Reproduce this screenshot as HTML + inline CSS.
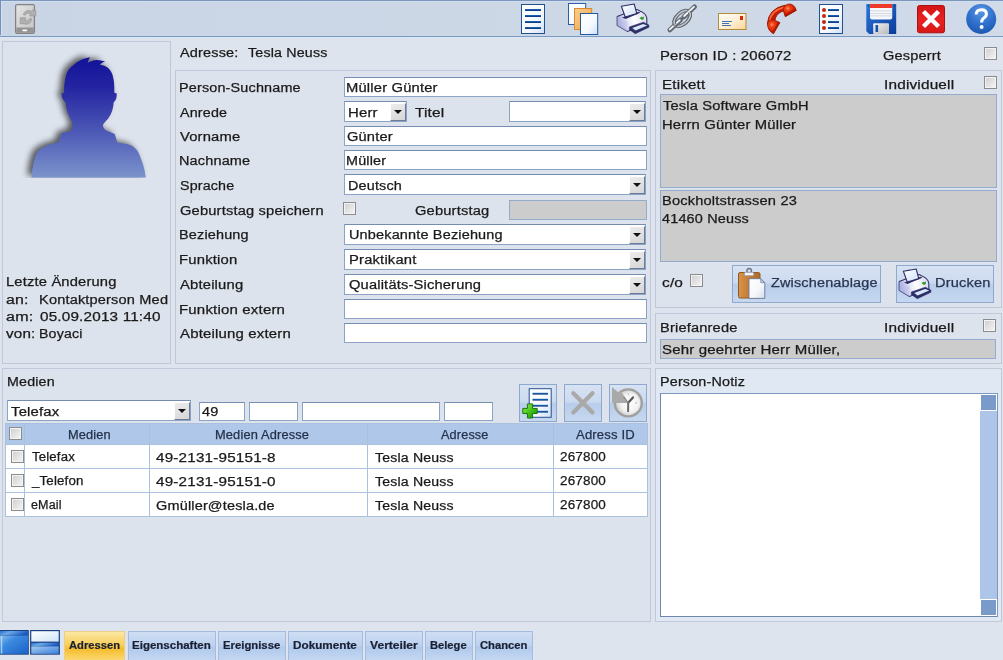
<!DOCTYPE html>
<html>
<head>
<meta charset="utf-8">
<title>Person</title>
<style>
html,body{margin:0;padding:0;}
body{width:1003px;height:660px;overflow:hidden;background:#dee4ed;position:relative;
 font-family:"Liberation Sans",sans-serif;font-size:12.5px;letter-spacing:0.15px;color:#1a1a1a;}
.abs,.t,.pn,.in,.sel,.cb,.gray,.btn{position:absolute;box-sizing:border-box;}
.t{transform-origin:0 0;white-space:nowrap;line-height:16px;height:16px;-webkit-text-stroke:0.25px currentColor;}
.pn{border:1px solid #c0c8d9;background:#dde3ed;}
.in{background:#fff;border:1px solid #8da3c6;border-top-color:#768db2;height:20px;line-height:18px;padding-left:3px;white-space:nowrap;overflow:hidden;}
.sel{background:#fff;border:1px solid #8da3c6;border-top-color:#768db2;height:21px;line-height:18px;padding-left:3px;white-space:nowrap;overflow:hidden;}
.sel i{position:absolute;right:0;top:1px;width:16px;height:18px;box-sizing:border-box;background:linear-gradient(160deg,#ececec,#d6d6d6);border:1px solid #6c7c96;border-top-color:#fdfdfd;border-left-color:#fdfdfd;}
.sel i:after{content:"";position:absolute;left:3px;top:6px;border:4px solid transparent;border-top:4px solid #111;border-bottom:0;}
.cb{width:13px;height:13px;border:1px solid #8b8c8e;background:linear-gradient(135deg,#cdcdcf,#f7f7f7);box-shadow:inset 0 0 0 1px #f3f3f4;}
.gray{background:#cccccc;border:1px solid #94abcd;}
#toolbar{position:absolute;left:0;top:0;width:1003px;height:38px;box-sizing:border-box;
 background:linear-gradient(90deg,#c9d5e5,#d0dae8);border-top:1px solid #7d97ba;border-bottom:1px solid #d8e5f8;
 box-shadow:inset 0 1px 0 #cfdef2, inset 0 -1px 0 #7f9abf;}
#tbl{position:absolute;left:0;top:0;width:1px;height:35px;background:#7590b8;}
#tbl:after{content:"";position:absolute;left:1px;top:2px;width:1px;height:33px;background:#d3e0f3;}

.btn{border:1px solid #8fa8cd;background:linear-gradient(#d7e2f3 0%,#ccdaf0 46%,#b9cdea 52%,#bfd2ed 75%,#c6d8f0 100%);}
.hd{background:#afc7e9;}
.wc{background:#fff;}
.tab{position:absolute;box-sizing:border-box;top:631px;height:29px;border:1px solid #a3bce0;border-bottom:0;
 background:linear-gradient(#cfdef4 0%,#bcd1ef 50%,#b0c9ec 55%,#c3d7f2 100%);font-weight:bold;font-size:11.5px;letter-spacing:0.2px;color:#1b2436;}
.tab.act{background:linear-gradient(#fce7a4 0%,#f9cf5c 45%,#f6bd2c 60%,#fbd772 100%);border-color:#e9cf8a;}
#root{position:absolute;left:0;top:0;width:1003px;height:660px;will-change:transform;}
.tt{position:absolute;top:639px;transform-origin:0 0;-webkit-text-stroke:0.2px currentColor;white-space:nowrap;line-height:14px;height:14px;font-weight:bold;font-size:10px;letter-spacing:0;color:#1a2034;}
</style>
</head>
<body>
<div id="root">
<div id="toolbar"></div><div id="tbl"></div>
<!--TB-->
<svg width="0" height="0" style="position:absolute">
<defs>
<linearGradient id="gPage" x1="0" y1="0" x2="1" y2="1"><stop offset="0" stop-color="#ffffff"/><stop offset="0.6" stop-color="#f4f8fe"/><stop offset="1" stop-color="#cfe0f8"/></linearGradient>
<linearGradient id="gLine" x1="0" y1="0" x2="0" y2="1"><stop offset="0" stop-color="#1c6fc0"/><stop offset="1" stop-color="#0a2f78"/></linearGradient>
<linearGradient id="gOr" x1="0" y1="0" x2="1" y2="1"><stop offset="0" stop-color="#fbd08a"/><stop offset="1" stop-color="#f2a04a"/></linearGradient>
<linearGradient id="gBody" x1="0" y1="0.2" x2="1" y2="0"><stop offset="0" stop-color="#a9aee2"/><stop offset="0.18" stop-color="#d6d8f2"/><stop offset="0.5" stop-color="#ffffff"/><stop offset="1" stop-color="#d2d2ee"/></linearGradient>
<linearGradient id="gPaper" x1="0" y1="0" x2="1" y2="1"><stop offset="0" stop-color="#ffffff"/><stop offset="1" stop-color="#cfe2fb"/></linearGradient>
<linearGradient id="gEnv" x1="0" y1="0" x2="1" y2="1"><stop offset="0" stop-color="#fffdf6"/><stop offset="0.5" stop-color="#fff0d6"/><stop offset="1" stop-color="#fbd396"/></linearGradient>
<linearGradient id="gFl" x1="0" y1="0" x2="1" y2="1"><stop offset="0" stop-color="#2a78dc"/><stop offset="1" stop-color="#0b3a98"/></linearGradient>
<linearGradient id="gSh" x1="0" y1="0" x2="1" y2="1"><stop offset="0" stop-color="#f4f4f4"/><stop offset="1" stop-color="#b8b8b8"/></linearGradient>
<linearGradient id="gRed" x1="0" y1="0" x2="0" y2="1"><stop offset="0" stop-color="#d21414"/><stop offset="0.5" stop-color="#e82222"/><stop offset="1" stop-color="#d81818"/></linearGradient>
<radialGradient id="gHelp" cx="0.5" cy="0.25" r="0.8"><stop offset="0" stop-color="#5a96e2"/><stop offset="0.55" stop-color="#2f6fcc"/><stop offset="1" stop-color="#1b55ae"/></radialGradient>
<radialGradient id="gPh" cx="0.36" cy="0.34" r="0.7"><stop offset="0" stop-color="#ff9a60"/><stop offset="0.22" stop-color="#f0481c"/><stop offset="0.6" stop-color="#d82406"/><stop offset="1" stop-color="#a81400"/></radialGradient>
<linearGradient id="gPhH" x1="0" y1="0" x2="1" y2="1"><stop offset="0" stop-color="#c01c04"/><stop offset="0.4" stop-color="#f45a28"/><stop offset="1" stop-color="#c82006"/></linearGradient>
<linearGradient id="gMob" x1="0" y1="0" x2="1" y2="1"><stop offset="0" stop-color="#e4e4e4"/><stop offset="1" stop-color="#c4c4c4"/></linearGradient>
<linearGradient id="gChain" x1="0" y1="0" x2="1" y2="1"><stop offset="0" stop-color="#9aa0a8"/><stop offset="1" stop-color="#6e747c"/></linearGradient>
<symbol id="printer" viewBox="0 0 44 38">
 <!-- body -->
 <path d="M5.2 16.6 L13 13.4 L25 9.6 L28 11 Q34 13.5 34.8 18 L34.8 24.5 L15.2 31.4 L5.2 25.4 Z" fill="url(#gBody)" stroke="#34346e" stroke-width="1.1" stroke-linejoin="round"/>
 <path d="M5.2 16.6 L15.6 21.6 L15.2 31.4 L5.2 25.4 Z" fill="#b9bce6" opacity="0.5"/>
 <!-- paper slot -->
 <path d="M10 17.6 L26.5 11.8 L28.4 12.8 L13.6 18.9 Z" fill="#2e2e66"/>
 <!-- paper -->
 <path d="M9.4 6.2 L22.2 4 L24.8 13.6 L13.2 17 Z" fill="url(#gPaper)" stroke="#2e2e66" stroke-width="1.1" stroke-linejoin="round"/>
 <!-- light -->
 <path d="M27.4 18.3 L29.8 16.5 L30 17.5 L31.8 16.3 L31.8 19 L29.6 20.2 L29.4 19.3 Z" fill="#2a9a22"/>
 <!-- tray -->
 <path d="M17.3 27 L31.4 22.2 L36.9 25 L36.9 27.2 L23.3 33.7 L17.3 29.6 Z" fill="#2e2e66" stroke="#2e2e66" stroke-width="0.6" stroke-linejoin="round"/>
 <path d="M20.2 27.9 L31.1 24 L35.2 25.4 L23.6 30.4 Z" fill="#d6e8fc"/>
</symbol>
</defs>
</svg>

<!-- mobile sync -->
<svg class="abs" style="left:12px;top:2px" width="28" height="34" viewBox="12 2 28 34">
 <rect x="15.600" y="4.600" width="18.800" height="28.800" rx="1.600" fill="url(#gMob)" stroke="#828282" stroke-width="1.300"/>
 <path d="M16.300 27.400 H33.700 V31.800 Q33.700 32.800 32.700 32.800 H17.300 Q16.300 32.800 16.300 31.800 Z" fill="#949494"/>
 <rect x="22.300" y="29.500" width="5" height="1.700" rx="0.850" fill="#fafafa"/>
 <path d="M23.300 14.600 Q25 10.200 29.600 10.600 L31 11.400 L32.600 9.800 L35.700 10.400 L35.700 16 L29.800 16 L30.600 13.600 Q27.500 11.800 24.800 15.200 Z" fill="#b0b0b0" stroke="#959595" stroke-width="0.700" stroke-linejoin="round"/>
 <path d="M31.600 18.800 Q30.800 24.600 25.400 24.200 L24.600 23.800 L20.200 23.800 L20.200 17.800 L25.800 17.800 L25 20.400 Q28 21.800 30 18.400 Z" fill="#b0b0b0" stroke="#959595" stroke-width="0.700" stroke-linejoin="round"/>
</svg>

<!-- list -->
<svg class="abs" style="left:518px;top:2px" width="30" height="34" viewBox="518 2 30 34">
 <rect x="521.5" y="4.5" width="23" height="29" fill="url(#gPage)" stroke="#23508e"/>
 <g fill="url(#gLine)"><rect x="525" y="9" width="16" height="2"/><rect x="525" y="15" width="16" height="2"/><rect x="525" y="21" width="16" height="2"/><rect x="525" y="27" width="16" height="2"/></g>
</svg>

<!-- copy -->
<svg class="abs" style="left:566px;top:1px" width="34" height="36" viewBox="566 1 34 36">
 <rect x="568.5" y="3.5" width="17.2" height="21" fill="url(#gPage)" stroke="#2a5ea6"/>
 <rect x="574.5" y="8.500" width="17.2" height="21" fill="url(#gOr)" stroke="#d98a32"/>
 <rect x="580.5" y="13.5" width="17.2" height="21" fill="url(#gPage)" stroke="#1f5aa6"/>
</svg>

<!-- printer -->
<svg class="abs" style="left:612px;top:0px" width="44" height="38"><use href="#printer"/></svg>

<!-- chain -->
<svg class="abs" style="left:660px;top:0px" width="44" height="38" viewBox="0 0 44 38">
 <g transform="rotate(-43 22.2 18.4)">
  <ellipse cx="22.200" cy="18.400" rx="9.600" ry="5.700" fill="none" stroke="#626870" stroke-width="3.600"/>
  <ellipse cx="22.200" cy="18.400" rx="9.600" ry="5.700" fill="none" stroke="#c2c7ce" stroke-width="1.500"/>
  <line x1="5.200" y1="18.400" x2="20.200" y2="18.400" stroke="#626870" stroke-width="4.600" stroke-linecap="round"/>
  <line x1="5.600" y1="18" x2="19.200" y2="18" stroke="#f2f4f6" stroke-width="1.900" stroke-linecap="round"/>
  <line x1="24.200" y1="18.400" x2="39.200" y2="18.400" stroke="#626870" stroke-width="4.600" stroke-linecap="round"/>
  <line x1="25.200" y1="18" x2="38.600" y2="18" stroke="#f2f4f6" stroke-width="1.900" stroke-linecap="round"/>
  <path d="M12.600 18.400 A9.600 5.700 0 0 1 20 12.900" fill="none" stroke="#626870" stroke-width="3.600"/>
  <path d="M12.600 18.400 A9.600 5.700 0 0 1 20 12.900" fill="none" stroke="#c2c7ce" stroke-width="1.500"/>
  <path d="M31.800 18.400 A9.600 5.700 0 0 1 24.400 23.900" fill="none" stroke="#626870" stroke-width="3.600"/>
  <path d="M31.800 18.400 A9.600 5.700 0 0 1 24.400 23.900" fill="none" stroke="#c2c7ce" stroke-width="1.500"/>
 </g>
</svg>

<!-- envelope -->
<svg class="abs" style="left:716px;top:11px" width="32" height="21" viewBox="716 11 32 21">
 <rect x="718.5" y="13.5" width="27.5" height="16" fill="url(#gEnv)" stroke="#b08c3e"/>
 <rect x="740" y="16" width="3" height="4" fill="#d42a12"/>
 <rect x="722" y="21" width="10" height="1" fill="#3a74b8"/><rect x="722" y="23" width="7" height="1" fill="#3a74b8"/><rect x="722" y="25" width="9" height="1" fill="#3a74b8"/>
</svg>

<!-- phone -->
<svg class="abs" style="left:760px;top:0px" width="44" height="38" viewBox="0 0 44 38">
 <path d="M7.400 24 Q8.300 8.800 24.800 5.200 L23.400 10.800 Q15.800 13.600 14.800 20.600 Z" fill="#c21c04" stroke="#9c1402" stroke-width="0.900" stroke-linejoin="round"/>
 <path d="M9.600 21 Q11 10.800 23.600 7.400" fill="none" stroke="#f86a38" stroke-width="1.700" stroke-linecap="round"/>
 <path d="M23 10 Q24 4.200 29.500 4 Q34.500 4.400 36.300 10.400 L25.300 16.700 Z" fill="url(#gPh)" stroke="#9c1402" stroke-width="0.800" stroke-linejoin="round"/>
 <path d="M25.300 16.700 L36.300 10.400 L35.600 8.600 L24.600 14.600 Z" fill="#a81602" opacity="0.750"/>
 <path d="M7.400 23.200 Q8.400 19.800 13.800 19.900 L19.900 22.600 L13.500 33.700 Q7.400 30.500 7.400 23.200 Z" fill="url(#gPh)" stroke="#9c1402" stroke-width="0.800" stroke-linejoin="round"/>
 <path d="M13.500 33.700 L19.900 22.600 L18.200 21.900 L12 32.800 Z" fill="#a81602" opacity="0.750"/>
</svg>

<!-- bullet list -->
<svg class="abs" style="left:816px;top:2px" width="30" height="34" viewBox="816 2 30 34">
 <rect x="819.5" y="4.5" width="23" height="29" fill="url(#gPage)" stroke="#23508e"/>
 <g fill="url(#gLine)"><rect x="828" y="9" width="11" height="2"/><rect x="828" y="15" width="11" height="2"/><rect x="828" y="21" width="11" height="2"/><rect x="828" y="27" width="11" height="2"/></g>
 <g fill="#c42810"><circle cx="824" cy="10" r="2"/><circle cx="824" cy="16" r="2"/><circle cx="824" cy="22" r="2"/><circle cx="824" cy="28" r="2"/></g>
</svg>

<!-- floppy -->
<svg class="abs" style="left:864px;top:2px" width="34" height="34" viewBox="864 2 34 34">
 <path d="M866.3 4 H896.2 V34 H869.2 L866.3 31.2 Z" fill="url(#gFl)"/>
 <path d="M870 4 H892.2 V17.5 Q892.2 19.5 890.2 19.5 H872 Q870 19.5 870 17.5 Z" fill="#f6f8fc"/>
 <rect x="870" y="4" width="22.200" height="4" fill="#ee3a26"/>
 <g fill="#c8ccd6"><rect x="870" y="10.500" width="22.200" height="0.8"/><rect x="870" y="13" width="22.200" height="0.8"/><rect x="870" y="15.500" width="22.200" height="0.8"/></g>
 <rect x="873.2" y="23.2" width="15.8" height="10.8" rx="1" fill="url(#gSh)"/>
 <rect x="875.5" y="25" width="2.600" height="7" fill="#1650b4"/>
 <rect x="868" y="5.500" width="1" height="1" fill="#08204e"/><rect x="893.6" y="5.500" width="1" height="1" fill="#08204e"/>
</svg>

<!-- red x -->
<svg class="abs" style="left:915px;top:3px" width="32" height="32" viewBox="915 3 32 32">
 <rect x="917.5" y="5.500" width="27" height="27.300" rx="2" fill="url(#gRed)" stroke="#ac1010"/>
 <path d="M923.500 11.500 L938.500 26.500 M938.500 11.500 L923.500 26.500" stroke="#fff" stroke-width="4.400" stroke-linecap="butt"/>
</svg>

<!-- help -->
<svg class="abs" style="left:964px;top:2px" width="34" height="34" viewBox="964 2 34 34">
 <circle cx="981.2" cy="19" r="15" fill="url(#gHelp)"/>
 <path d="M976.200 14.500 Q976.400 9.800 981.400 9.800 Q986.400 9.800 986.400 14 Q986.400 16.500 983.600 18.200 Q981.600 19.400 981.600 22.500" fill="none" stroke="#fff" stroke-width="3"/>
 <circle cx="981.600" cy="27" r="2" fill="#fff"/>
</svg>

<!--/TB-->

<!-- left panel -->
<div class="pn" style="left:2px;top:41px;width:169px;height:323px;"></div>
<!-- avatar -->
<svg class="abs" style="left:4px;top:42px" width="166" height="150" viewBox="4 42 166 150">
<defs>
<linearGradient id="gAv" x1="0" y1="57" x2="0" y2="178" gradientUnits="userSpaceOnUse"><stop offset="0" stop-color="#12129a"/><stop offset="0.25" stop-color="#2424a2"/><stop offset="0.6" stop-color="#4a56b4"/><stop offset="1" stop-color="#7c94cc"/></linearGradient>
<filter id="fAv" x="-20%" y="-20%" width="140%" height="140%"><feGaussianBlur in="SourceAlpha" stdDeviation="3.2"/><feOffset dx="-4" dy="-2.500"/><feComponentTransfer><feFuncA type="linear" slope="0.62"/></feComponentTransfer></filter>
<clipPath id="cAv"><rect x="4" y="42" width="166" height="136"/></clipPath>
</defs>
<g clip-path="url(#cAv)"><path id="avp" filter="url(#fAv)" fill="#101030" d="M31.5 177.6 C32 170 33.5 160 36.2 154.3 C38 150.500 42 147.500 50 144.300 L58.5 142.200 L60 137.300 L62.100 133.100 L70.600 130.900 C72.500 128 73 125 72.300 122.400 C70.500 119.500 68 114 67 110.800 C66 107 65.800 104 65.500 102.300 C63.500 100.500 62.300 98.500 62.100 97 L61.700 93.400 L64.200 92.700 C63.800 86 64.800 79 67 72.600 C69 68.500 71 67 73.300 65.200 C76 62.500 78.500 61 80.800 59.900 C84 58.500 87 57.800 90.300 57.300 C89 59 88 61 87.800 62.800 C90.500 61 93.500 60.200 96.700 59.900 C99.500 60 102.500 60.600 105.200 61.500 C103 62.200 101.200 63.400 99.900 64.700 C103.500 65.200 106.400 66.500 108.400 68.300 C111 71 112.500 74 113 76.800 C113.800 80 114.300 84 114.300 87.400 L114.300 92.700 L116.800 93.400 L116.400 98 C115.800 99.800 114.800 101.200 113.700 102.300 C113.500 105 113 108 112.200 110.800 C111.200 113.500 110 116 108.400 118.200 L103.700 123.500 C103 124.500 102.900 125.600 103.100 126.700 L105.200 129.900 L114.700 134.100 L117.300 142.600 L127.500 144.300 C131 145.200 134 146.800 135.900 149 C138.500 152 140 155.500 141.200 159.600 C143 164 144.200 168 144.900 172.300 L145.900 177.600 Z"/></g>
<path fill="url(#gAv)" d="M31.5 177.6 C32 170 33.5 160 36.2 154.3 C38 150.500 42 147.500 50 144.300 L58.5 142.200 L60 137.300 L62.100 133.100 L70.600 130.900 C72.500 128 73 125 72.300 122.400 C70.500 119.500 68 114 67 110.800 C66 107 65.800 104 65.500 102.300 C63.500 100.500 62.300 98.500 62.100 97 L61.700 93.400 L64.200 92.700 C63.800 86 64.800 79 67 72.600 C69 68.500 71 67 73.300 65.200 C76 62.500 78.500 61 80.800 59.900 C84 58.500 87 57.800 90.300 57.300 C89 59 88 61 87.800 62.800 C90.500 61 93.500 60.200 96.700 59.900 C99.500 60 102.500 60.600 105.200 61.500 C103 62.200 101.200 63.400 99.900 64.700 C103.500 65.200 106.400 66.500 108.400 68.300 C111 71 112.500 74 113 76.800 C113.800 80 114.300 84 114.300 87.400 L114.300 92.700 L116.800 93.400 L116.400 98 C115.800 99.800 114.800 101.200 113.700 102.300 C113.500 105 113 108 112.200 110.800 C111.200 113.500 110 116 108.400 118.200 L103.700 123.500 C103 124.500 102.900 125.600 103.100 126.700 L105.200 129.900 L114.700 134.100 L117.300 142.600 L127.500 144.300 C131 145.200 134 146.800 135.900 149 C138.500 152 140 155.500 141.200 159.600 C143 164 144.200 168 144.900 172.300 L145.900 177.600 Z"/>
</svg>
<div class="t" style="left:5.62px;top:273px;transform:translateY(0.6px) scaleX(1.1765);">Letzte Änderung</div>
<div class="t" style="left:5.79px;top:291px;transform:translateY(0.6px) scaleX(1.2700);">an:</div>
<div class="t" style="left:39.34px;top:291px;width:131px;overflow:hidden;transform:translateY(0.6px) scaleX(1.1641);">Kontaktperson Med</div>
<div class="t" style="left:5.78px;top:308px;transform:translateY(0.6px) scaleX(1.2855);">am:</div>
<div class="t" style="left:39.61px;top:308px;transform:translateY(0.6px) scaleX(1.2211);">05.09.2013 11:40</div>
<div class="t" style="left:6.00px;top:325px;transform:translateY(0.6px) scaleX(1.2162);">von:</div>
<div class="t" style="left:39.37px;top:325px;transform:translateY(0.6px) scaleX(1.1318);">Boyaci</div>

<!-- header -->
<div class="t" style="left:179.80px;top:44px;transform:translateY(0.6px) scaleX(1.1578);">Adresse:</div>
<div class="t" style="left:247.98px;top:44px;transform:translateY(0.6px) scaleX(1.1398);">Tesla Neuss</div>

<!-- form panel -->
<div class="pn" style="left:175px;top:70px;width:476px;height:294px;"></div>
<div class="t" style="left:179.45px;top:79px;transform:translateY(0.6px) scaleX(1.1509);">Person-Suchname</div>
<div class="t" style="left:179.80px;top:104px;transform:translateY(0.6px) scaleX(1.1439);">Anrede</div>
<div class="t" style="left:179.80px;top:128px;transform:translateY(0.6px) scaleX(1.1827);">Vorname</div>
<div class="t" style="left:179.44px;top:152px;transform:translateY(0.6px) scaleX(1.1558);">Nachname</div>
<div class="t" style="left:179.65px;top:177px;transform:translateY(0.6px) scaleX(1.1403);">Sprache</div>
<div class="t" style="left:179.63px;top:202px;transform:translateY(0.6px) scaleX(1.1735);">Geburtstag speichern</div>
<div class="t" style="left:179.45px;top:226px;transform:translateY(0.6px) scaleX(1.1541);">Beziehung</div>
<div class="t" style="left:179.41px;top:251px;transform:translateY(0.6px) scaleX(1.1884);">Funktion</div>
<div class="t" style="left:179.80px;top:276px;transform:translateY(0.6px) scaleX(1.1839);">Abteilung</div>
<div class="t" style="left:179.40px;top:301px;transform:translateY(0.6px) scaleX(1.2004);">Funktion extern</div>
<div class="t" style="left:179.80px;top:325px;transform:translateY(0.6px) scaleX(1.1971);">Abteilung extern</div>

<div class="in" style="left:344px;top:77px;width:303px;"></div>
<div class="t" style="left:346.22px;top:79px;transform:translateY(0.6px) scaleX(1.1800);">Müller Günter</div>
<div class="sel" style="left:344px;top:101px;width:63px;"><i></i></div>
<div class="t" style="left:348.16px;top:104px;transform:translateY(0.6px) scaleX(1.1932);">Herr</div>
<div class="t" style="left:414.70px;top:104px;transform:translateY(0.6px) scaleX(1.2317);">Titel</div>
<div class="sel" style="left:509px;top:101px;width:137px;"><i></i></div>
<div class="in" style="left:344px;top:126px;width:303px;"></div>
<div class="t" style="left:346.64px;top:128px;transform:translateY(0.6px) scaleX(1.1691);">Günter</div>
<div class="in" style="left:344px;top:150px;width:303px;"></div>
<div class="t" style="left:346.45px;top:152px;transform:translateY(0.6px) scaleX(1.1496);">Müller</div>
<div class="sel" style="left:344px;top:174px;width:302px;"><i></i></div>
<div class="t" style="left:348.20px;top:177px;transform:translateY(0.6px) scaleX(1.1520);">Deutsch</div>
<div class="cb" style="left:343px;top:202px;"></div>
<div class="t" style="left:414.93px;top:202px;transform:translateY(0.6px) scaleX(1.1741);">Geburtstag</div>
<div class="gray" style="left:509px;top:200px;width:138px;height:20px;"></div>
<div class="sel" style="left:344px;top:224px;width:302px;"><i></i></div>
<div class="t" style="left:348.76px;top:226px;transform:translateY(0.6px) scaleX(1.1561);">Unbekannte Beziehung</div>
<div class="sel" style="left:344px;top:249px;width:302px;"><i></i></div>
<div class="t" style="left:348.62px;top:251px;transform:translateY(0.6px) scaleX(1.1831);">Praktikant</div>
<div class="sel" style="left:344px;top:274px;width:302px;"><i></i></div>
<div class="t" style="left:348.83px;top:276px;transform:translateY(0.6px) scaleX(1.1735);">Qualitäts-Sicherung</div>
<div class="in" style="left:344px;top:299px;width:303px;"></div>
<div class="in" style="left:344px;top:323px;width:303px;"></div>

<!-- right header -->
<div class="t" style="left:659.91px;top:47px;transform:translateY(0.6px) scaleX(1.1916);">Person ID : 206072</div>
<div class="t" style="left:883.14px;top:47px;transform:translateY(0.6px) scaleX(1.1641);">Gesperrt</div>
<div class="cb" style="left:984px;top:47px;"></div>

<!-- Etikett panel -->
<div class="pn" style="left:655px;top:70px;width:347px;height:238px;"></div>
<div class="t" style="left:661.89px;top:76px;transform:translateY(0.6px) scaleX(1.2088);">Etikett</div>
<div class="t" style="left:884.37px;top:76px;transform:translateY(0.6px) scaleX(1.2275);">Individuell</div>
<div class="cb" style="left:984px;top:76px;"></div>
<div class="gray" style="left:660px;top:94px;width:337px;height:94px;"></div>
<div class="t" style="left:662.72px;top:97px;transform:translateY(0.6px) scaleX(1.1724);">Tesla Software GmbH</div>
<div class="t" style="left:662.42px;top:116px;transform:translateY(0.6px) scaleX(1.1845);">Herrn Günter Müller</div>
<div class="gray" style="left:660px;top:190px;width:337px;height:72px;"></div>
<div class="t" style="left:661.93px;top:192px;transform:translateY(0.6px) scaleX(1.1699);">Bockholtstrassen 23</div>
<div class="t" style="left:661.72px;top:210px;transform:translateY(0.6px) scaleX(1.1550);">41460 Neuss</div>
<div class="t" style="left:661.60px;top:274px;transform:translateY(0.6px) scaleX(1.2344);">c/o</div>
<div class="cb" style="left:690px;top:274px;"></div>
<div class="btn" style="left:732px;top:265px;width:149px;height:38px;"></div>
<svg class="abs" style="left:735px;top:266px" width="32" height="35" viewBox="735 266 32 35">
<defs>
<linearGradient id="gCb" x1="0" y1="0" x2="1" y2="0"><stop offset="0" stop-color="#d9934a"/><stop offset="0.5" stop-color="#c47c34"/><stop offset="1" stop-color="#b06a28"/></linearGradient>
<linearGradient id="gCp" x1="0" y1="0" x2="1" y2="1"><stop offset="0" stop-color="#ffffff"/><stop offset="0.6" stop-color="#f4f6fa"/><stop offset="1" stop-color="#d4dcea"/></linearGradient>
</defs>
<rect x="738.500" y="272.500" width="21.500" height="25.500" rx="1.500" fill="url(#gCb)" stroke="#8e5a22"/>
<circle cx="749.200" cy="270.800" r="2.300" fill="none" stroke="#707684" stroke-width="1.400"/>
<rect x="744.500" y="272.300" width="9.200" height="3.400" rx="0.800" fill="#f2f4f8" stroke="#8a90a0" stroke-width="0.700"/>
<path d="M749 278.700 H760.800 L764.800 282.700 V298.400 H749 Z" fill="url(#gCp)" stroke="#67789a" stroke-width="0.900" stroke-linejoin="round"/>
<path d="M760.800 278.700 V282.700 H764.800 Z" fill="#c6d0e2" stroke="#67789a" stroke-width="0.700" stroke-linejoin="round"/>
</svg>
<div class="t" style="left:771.47px;top:274px;color:#2a3650;transform:translateY(0.6px) scaleX(1.1546);">Zwischenablage</div>
<div class="btn" style="left:896px;top:265px;width:98px;height:38px;"></div>
<svg class="abs" style="left:894px;top:265px" width="44" height="38"><use href="#printer"/></svg>
<div class="t" style="left:935.43px;top:274px;color:#2a3650;transform:translateY(0.6px) scaleX(1.1674);">Drucken</div>

<!-- Briefanrede panel -->
<div class="pn" style="left:655px;top:313px;width:347px;height:51px;"></div>
<div class="t" style="left:659.93px;top:319px;transform:translateY(0.6px) scaleX(1.1697);">Briefanrede</div>
<div class="t" style="left:884.37px;top:319px;transform:translateY(0.6px) scaleX(1.2275);">Individuell</div>
<div class="cb" style="left:983px;top:319px;"></div>
<div class="gray" style="left:660px;top:339px;width:336px;height:20px;"></div>
<div class="t" style="left:661.62px;top:341px;transform:translateY(0.6px) scaleX(1.2010);">Sehr geehrter Herr Müller,</div>

<!-- Medien panel -->
<div class="pn" style="left:2px;top:368px;width:649px;height:254px;"></div>
<div class="t" style="left:6.96px;top:373px;transform:translateY(0.6px) scaleX(1.1400);">Medien</div>
<div class="sel" style="left:7px;top:400px;width:184px;"><i></i></div>
<div class="t" style="left:10.96px;top:403px;transform:translateY(0.6px) scaleX(1.1921);">Telefax</div>
<div class="in" style="left:199px;top:402px;width:46px;height:19px;line-height:17px;"></div>
<div class="t" style="left:202.22px;top:403px;transform:translateY(0.6px) scaleX(1.1601);">49</div>
<div class="in" style="left:249px;top:402px;width:49px;height:19px;"></div>
<div class="in" style="left:302px;top:402px;width:138px;height:19px;"></div>
<div class="in" style="left:444px;top:402px;width:49px;height:19px;"></div>
<div class="btn" style="left:519px;top:384px;width:38px;height:38px;"></div>
<div class="btn" style="left:564px;top:384px;width:38px;height:38px;"></div>
<div class="btn" style="left:609px;top:384px;width:38px;height:38px;"></div>

<svg class="abs" style="left:519px;top:384px" width="130" height="38" viewBox="519 384 130 38">
<defs>
<linearGradient id="gPl" x1="0" y1="0" x2="1" y2="1"><stop offset="0" stop-color="#a8f060"/><stop offset="0.5" stop-color="#44c418"/><stop offset="1" stop-color="#1c8a08"/></linearGradient>
<radialGradient id="gCl" cx="0.55" cy="0.5" r="0.55"><stop offset="0" stop-color="#ffffff"/><stop offset="0.6" stop-color="#f2f2f2"/><stop offset="1" stop-color="#c4c4c4"/></radialGradient>
</defs>
<!-- add list -->
<rect x="529.200" y="388.700" width="22" height="28.600" fill="url(#gPage)" stroke="#23508e"/>
<g fill="url(#gLine)"><rect x="532.500" y="392.800" width="15.500" height="1.800"/><rect x="532.500" y="398.800" width="15.500" height="1.800"/><rect x="532.500" y="404.800" width="15.500" height="1.800"/><rect x="532.500" y="410.800" width="15.500" height="1.800"/></g>
<path d="M527.400 403.900 H532.600 V408.400 H537.200 V413.500 H532.600 V418 H527.400 V413.500 H522.800 V408.400 H527.400 Z" fill="url(#gPl)" stroke="#14780a" stroke-width="1" stroke-linejoin="round"/>
<!-- gray x -->
<path d="M573.300 393.200 L592.500 412.500 M592.500 393.200 L573.300 412.500" stroke="#a9a9a9" stroke-width="4.200" stroke-linecap="round"/>
<!-- clock -->
<circle cx="628.300" cy="402.900" r="13.500" fill="url(#gCl)" stroke="#a0a0a0" stroke-width="2.400"/>
<path d="M628.300 402.900 L613.600 402.900 A14.700 14.700 0 0 1 620.300 390.600 L624.400 396.600 Z" fill="#a9a9a9"/>
<path d="M612 387 L619.200 393.200 L615 402.900 L612 402.900 Z" fill="#a9a9a9"/>
<path d="M628.200 402.800 L633 397.400" stroke="#585858" stroke-width="2.200" stroke-linecap="round"/>
<path d="M628.200 402.800 L628.100 411.200" stroke="#6a6a6a" stroke-width="2" stroke-linecap="round"/>
<path d="M628.200 402.800 L624 397.200" stroke="#8a8a8a" stroke-width="1.200" stroke-linecap="round"/>
<g fill="#b0b0b0"><rect x="635.200" y="402.400" width="1.800" height="1"/><rect x="627.800" y="393.400" width="1" height="1.600"/></g>
</svg>
<!-- table -->
<div class="abs" style="left:5px;top:423px;width:643px;height:94px;background:#a9c0df;"></div>
<div class="abs hd" style="left:6px;top:424px;width:18px;height:20px;"></div>
<div class="abs hd" style="left:25px;top:424px;width:124px;height:20px;"></div>
<div class="abs hd" style="left:150px;top:424px;width:217px;height:20px;"></div>
<div class="abs hd" style="left:368px;top:424px;width:185px;height:20px;"></div>
<div class="abs hd" style="left:554px;top:424px;width:93px;height:20px;"></div>
<div class="t" style="left:67.58px;top:426px;color:#25324a;transform:translateY(0.6px) scaleX(1.0213);">Medien</div>
<div class="t" style="left:215.07px;top:426px;color:#25324a;transform:translateY(0.6px) scaleX(1.0256);">Medien Adresse</div>
<div class="t" style="left:441.05px;top:426px;color:#25324a;transform:translateY(0.6px) scaleX(1.0140);">Adresse</div>
<div class="t" style="left:575.55px;top:426px;color:#25324a;transform:translateY(0.6px) scaleX(1.0477);">Adress ID</div>
<div class="cb" style="left:9px;top:427px;"></div>
<div class="abs wc" style="left:6px;top:445px;width:18px;height:23px;"></div>
<div class="abs wc" style="left:25px;top:445px;width:124px;height:23px;"></div>
<div class="abs wc" style="left:150px;top:445px;width:217px;height:23px;"></div>
<div class="abs wc" style="left:368px;top:445px;width:185px;height:23px;"></div>
<div class="abs wc" style="left:554px;top:445px;width:93px;height:23px;"></div>
<div class="cb" style="left:11px;top:450px;"></div>
<div class="t" style="left:31.50px;top:448px;transform:translateY(0.6px) scaleX(1.0555);">Telefax</div>
<div class="t" style="left:156.46px;top:449px;transform:translateY(0.6px) scaleX(1.2202);">49-2131-95151-8</div>
<div class="t" style="left:374.73px;top:449px;transform:translateY(0.6px) scaleX(1.1289);">Tesla Neuss</div>
<div class="t" style="left:560.43px;top:448px;transform:translateY(0.6px) scaleX(1.0788);">267800</div>
<div class="abs wc" style="left:6px;top:469px;width:18px;height:23px;"></div>
<div class="abs wc" style="left:25px;top:469px;width:124px;height:23px;"></div>
<div class="abs wc" style="left:150px;top:469px;width:217px;height:23px;"></div>
<div class="abs wc" style="left:368px;top:469px;width:185px;height:23px;"></div>
<div class="abs wc" style="left:554px;top:469px;width:93px;height:23px;"></div>
<div class="cb" style="left:11px;top:474px;"></div>
<div class="t" style="left:31.82px;top:472px;transform:translateY(0.6px) scaleX(1.0646);">_Telefon</div>
<div class="t" style="left:156.46px;top:473px;transform:translateY(0.6px) scaleX(1.2202);">49-2131-95151-0</div>
<div class="t" style="left:374.73px;top:473px;transform:translateY(0.6px) scaleX(1.1289);">Tesla Neuss</div>
<div class="t" style="left:560.43px;top:472px;transform:translateY(0.6px) scaleX(1.0788);">267800</div>
<div class="abs wc" style="left:6px;top:493px;width:18px;height:23px;"></div>
<div class="abs wc" style="left:25px;top:493px;width:124px;height:23px;"></div>
<div class="abs wc" style="left:150px;top:493px;width:217px;height:23px;"></div>
<div class="abs wc" style="left:368px;top:493px;width:185px;height:23px;"></div>
<div class="abs wc" style="left:554px;top:493px;width:93px;height:23px;"></div>
<div class="cb" style="left:11px;top:498px;"></div>
<div class="t" style="left:31.47px;top:496px;transform:translateY(0.6px) scaleX(1.0029);">eMail</div>
<div class="t" style="left:156.39px;top:497px;transform:translateY(0.6px) scaleX(1.1576);">Gmüller@tesla.de</div>
<div class="t" style="left:374.73px;top:497px;transform:translateY(0.6px) scaleX(1.1289);">Tesla Neuss</div>
<div class="t" style="left:560.43px;top:496px;transform:translateY(0.6px) scaleX(1.0788);">267800</div>

<!-- Person-Notiz panel -->
<div class="pn" style="left:655px;top:368px;width:347px;height:254px;background:#e0e8f4;"></div>
<div class="t" style="left:659.95px;top:373px;transform:translateY(0.6px) scaleX(1.1478);">Person-Notiz</div>
<div class="abs" style="left:660px;top:393px;width:338px;height:224px;background:#fff;border:1px solid #6e86aa;border-top-color:#8098bd;border-right-color:#8098bd;"></div>
<div class="abs" style="left:980px;top:394px;width:17px;height:222px;background:#adc5e8;"></div>
<div class="abs" style="left:980px;top:394px;width:17px;height:17px;background:#7a9bca;border:1px solid #fff;"></div>
<div class="abs" style="left:980px;top:599px;width:17px;height:17px;background:#7a9bca;border:1px solid #fff;"></div>

<!-- bottom -->
<svg class="abs" style="left:0px;top:629px" width="62" height="27" viewBox="0 629 62 27">
<defs>
<linearGradient id="gW1" x1="0" y1="0" x2="1" y2="1"><stop offset="0" stop-color="#8cc0f0"/><stop offset="0.35" stop-color="#3c8ae0"/><stop offset="1" stop-color="#1a62c8"/></linearGradient>
<linearGradient id="gW1t" x1="0" y1="0" x2="1" y2="0.3"><stop offset="0" stop-color="#2a70d0"/><stop offset="0.4" stop-color="#6aa8e8"/><stop offset="1" stop-color="#1a5cc0"/></linearGradient>
<linearGradient id="gW2" x1="0" y1="0" x2="1" y2="1"><stop offset="0" stop-color="#ffffff"/><stop offset="1" stop-color="#cfe3f8"/></linearGradient>
<linearGradient id="gW3" x1="0" y1="0" x2="1" y2="1"><stop offset="0" stop-color="#a4ccf4"/><stop offset="1" stop-color="#3a80d8"/></linearGradient>
</defs>
<rect x="-1" y="630" width="29.800" height="24.700" fill="#1c3f80"/>
<rect x="0" y="631" width="28" height="4.200" fill="url(#gW1t)"/>
<rect x="0" y="635.500" width="28" height="18.300" fill="url(#gW1)"/>
<rect x="0.800" y="636" width="1.500" height="17.500" fill="#b4d8f6" opacity="0.850"/>
<rect x="30.100" y="630" width="29.800" height="24.700" fill="#1c3f80"/>
<rect x="31.300" y="631.200" width="27.400" height="10.400" fill="url(#gW2)"/>
<rect x="31.300" y="642.800" width="27.400" height="3.400" fill="url(#gW1t)"/>
<rect x="31.300" y="646.400" width="27.400" height="7.400" fill="url(#gW3)"/>
</svg>
<div class="tab act" style="left:64px;width:61px;"></div>
<div class="tt" style="left:68.62px;transform:scaleX(1.1181);">Adressen</div>
<div class="tab" style="left:128px;width:88px;"></div>
<div class="tt" style="left:132.42px;transform:scaleX(1.1511);">Eigenschaften</div>
<div class="tab" style="left:218px;width:68px;"></div>
<div class="tt" style="left:223.33px;transform:scaleX(1.1312);">Ereignisse</div>
<div class="tab" style="left:288px;width:75px;"></div>
<div class="tt" style="left:293.11px;transform:scaleX(1.1726);">Dokumente</div>
<div class="tab" style="left:365px;width:58px;"></div>
<div class="tt" style="left:370.00px;transform:scaleX(1.2102);">Verteiler</div>
<div class="tab" style="left:425px;width:48px;"></div>
<div class="tt" style="left:430.44px;transform:scaleX(1.1163);">Belege</div>
<div class="tab" style="left:475px;width:58px;"></div>
<div class="tt" style="left:479.92px;transform:scaleX(1.1239);">Chancen</div>


</div>
</body>
</html>
